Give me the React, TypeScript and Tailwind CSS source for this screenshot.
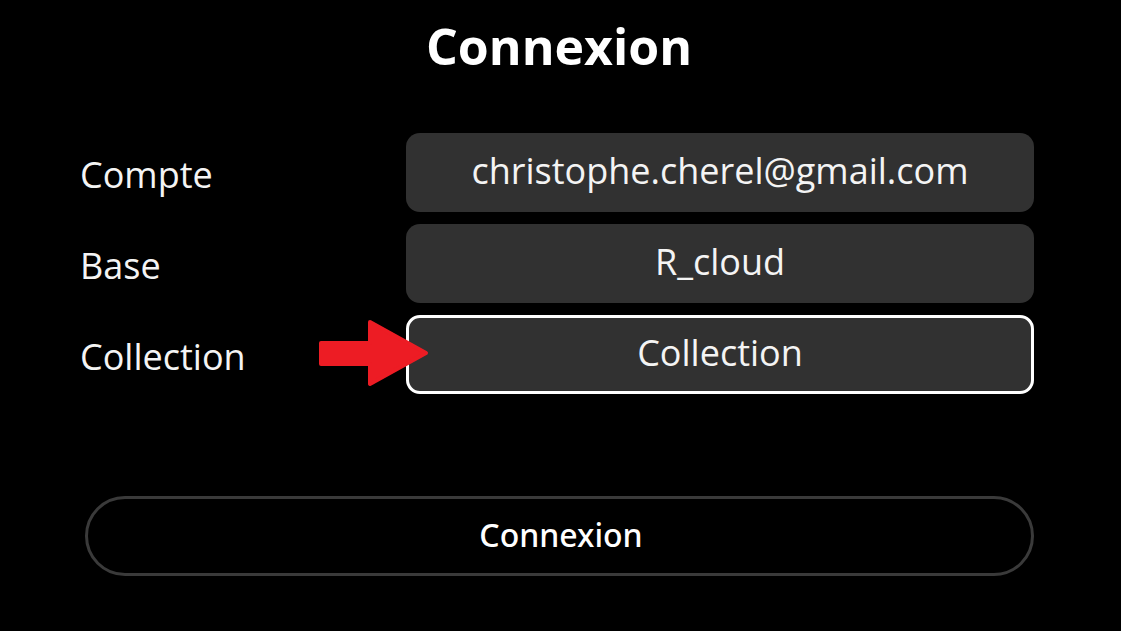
import React from "react";

function Field({ value, active }: { value: string; active?: boolean }) {
  return (
    <div
      className={
        "flex-1 h-[79px] rounded-[14px] bg-[#313131] flex items-center justify-center text-[36px] text-[#f4f4f4] " +
        (active ? "border-[3px] border-white" : "")
      }
    >
      <span className="leading-none pb-[4px]">{value}</span>
    </div>
  );
}

function Row({ label, value, active }: { label: string; value: string; active?: boolean }) {
  return (
    <div className="flex items-center">
      <div className="w-[326px] text-[36px] text-[#f4f4f4] leading-none pt-[4px]">{label}</div>
      <Field value={value} active={active} />
    </div>
  );
}

export default function App() {
  return (
    <div className="relative w-[1121px] h-[631px] bg-black overflow-hidden font-['Open_Sans',sans-serif]">
      <div className="h-[133px] pt-[21px] text-center">
        <h1 className="text-[50px] font-bold leading-none text-white -ml-[3px]">Connexion</h1>
      </div>
      <div className="flex flex-col gap-[12px] pl-[80px] pr-[87px]">
        <Row label="Compte" value="christophe.cherel@gmail.com" />
        <Row label="Base" value="R_cloud" />
        <Row label="Collection" value="Collection" active />
      </div>
      <div className="mt-[102px] ml-[85px] w-[949px]">
        <button className="w-full h-[80px] rounded-full border-[3px] border-[#3a3a3a] bg-black text-white text-[32px] font-medium font-['Noto_Sans',sans-serif] flex items-center justify-center">
          <span className="leading-none pb-[2px] pl-[3px]">Connexion</span>
        </button>
      </div>
      <svg
        className="absolute left-[310px] top-[310px]"
        width="130"
        height="90"
        viewBox="0 0 130 90"
      >
        <polygon
          points="11,33 60,33 60,12 116,43 60,74 60,54 11,54"
          fill="#ED1C24"
          stroke="#ED1C24"
          strokeWidth="4"
          strokeLinejoin="round"
        />
      </svg>
    </div>
  );
}
